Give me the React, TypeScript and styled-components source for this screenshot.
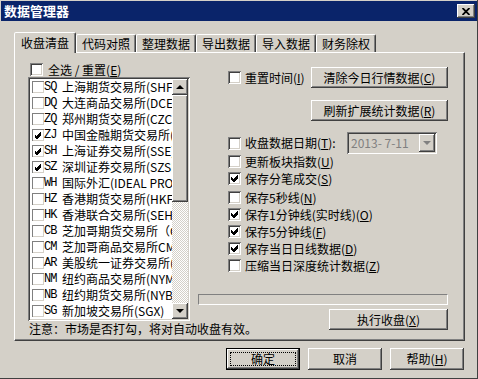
import styled, { createGlobalStyle, css } from "styled-components";

const GlobalStyle = createGlobalStyle`
  html, body { margin: 0; padding: 0; background: #d4d0c8; }
  body {
    font-family: "Noto Sans CJK SC", "Liberation Sans", sans-serif;
    font-size: 12px;
    color: #000;
  }
  * { box-sizing: border-box; }
`;

const raised = css`
  box-shadow: inset -1px -1px #404040, inset 1px 1px #fff, inset -2px -2px #808080, inset 2px 2px #d4d0c8;
`;

const sunken = css`
  box-shadow: inset 1px 1px #808080, inset -1px -1px #fff, inset 2px 2px #404040, inset -2px -2px #d4d0c8;
`;

const Window = styled.div`
  width: 478px;
  height: 379px;
  padding: 1px;
  background: #d4d0c8;
  box-shadow: inset -1px -1px #404040, inset 1px 1px #d4d0c8;
  display: flex;
  flex-direction: column;
`;

const TitleBar = styled.div`
  height: 20px;
  background: #0a246a;
  display: flex;
  align-items: center;
  padding: 0 2px 0 3px;
`;

const Title = styled.div`
  flex: 1;
  color: #fff;
  font-weight: bold;
  font-size: 13px;
  line-height: 16px;
`;

const CloseButton = styled.div`
  width: 18px;
  height: 14px;
  background: #d4d0c8;
  ${raised};
  display: flex;
  align-items: center;
  justify-content: center;
`;

const Body = styled.div`
  padding: 11px 12px 0 13px;
  display: flex;
  flex-direction: column;
`;

const TabStrip = styled.div`
  height: 20px;
  display: flex;
  align-items: flex-end;
  position: relative;
  z-index: 1;
`;

const Tab = styled.div<{ $active?: boolean }>`
  width: ${(p) => (p.$active ? 62 : 60)}px;
  height: ${(p) => (p.$active ? 21 : 18)}px;
  margin-bottom: ${(p) => (p.$active ? -1 : 0)}px;
  background: #d4d0c8;
  border: 1px solid;
  border-bottom: 0;
  border-color: #fff #404040 transparent #fff;
  border-radius: 2px 2px 0 0;
  box-shadow: inset -1px 0 #808080;
  display: flex;
  align-items: center;
  justify-content: center;
  line-height: 14px;
  padding-bottom: ${(p) => (p.$active ? 1 : 0)}px;
`;

const Panel = styled.div`
  height: 289px;
  border: 1px solid;
  border-color: #fff #404040 #404040 #fff;
  box-shadow: inset -1px -1px #808080;
  display: grid;
  grid-template-columns: 162px 250px;
  column-gap: 8px;
  align-items: start;
  padding: 9px 0 0 13px;
`;

const LeftCol = styled.div`
  display: flex;
  flex-direction: column;
`;

const SelectAll = styled.div`
  height: 15px;
  display: flex;
  align-items: center;
  gap: 5px;
  padding-left: 2px;
  line-height: 14px;
`;

const ListBox = styled.div`
  width: 162px;
  height: 244px;
  padding: 2px;
  background: #fff;
  ${sunken};
  display: flex;
`;

const Rows = styled.div`
  flex: 1;
  overflow: hidden;
`;

const Row = styled.div`
  height: 16px;
  display: flex;
  align-items: center;
  padding-left: 2px;
  white-space: nowrap;
  line-height: 16px;
`;

const Code = styled.span`
  width: 18px;
  flex-shrink: 0;
  font-family: "Liberation Mono", monospace;
  font-size: 12px;
  letter-spacing: -1px;
`;

const Scrollbar = styled.div`
  width: 16px;
  display: flex;
  flex-direction: column;
`;

const ScrollButton = styled.div`
  width: 16px;
  height: 16px;
  background: #d4d0c8;
  ${raised};
  display: flex;
  align-items: center;
  justify-content: center;
`;

const Thumb = styled.div`
  height: 107px;
  background: #d4d0c8;
  ${raised};
`;

const Track = styled.div`
  flex: 1;
  background: repeating-conic-gradient(#fff 0 25%, #d4d0c8 0 50%) 0 0 / 2px 2px;
`;

const Arrow = styled.span<{ $down?: boolean; $color?: string }>`
  width: 0;
  height: 0;
  border-left: 4px solid transparent;
  border-right: 4px solid transparent;
  ${(p) =>
    p.$down
      ? `border-top: 4px solid ${p.$color || "#000"};`
      : `border-bottom: 4px solid ${p.$color || "#000"};`}
`;

const Note = styled.div`
  margin-top: 1px;
  padding-left: 1px;
  white-space: nowrap;
  line-height: 14px;
`;

const RightCol = styled.div`
  margin-top: 5px;
  display: flex;
  flex-direction: column;
`;

const TopRow = styled.div`
  height: 21px;
  display: flex;
  align-items: center;
  justify-content: space-between;
  padding-left: 30px;
`;

const ButtonRow = styled.div<{ $top: number }>`
  margin-top: ${(p) => p.$top}px;
  display: flex;
  justify-content: flex-end;
`;

const Button = styled.button<{ $w: number; $h?: number }>`
  width: ${(p) => p.$w}px;
  height: ${(p) => p.$h || 21}px;
  padding: 0;
  border: 0;
  background: #d4d0c8;
  ${raised};
  font: inherit;
  font-size: 12px;
  line-height: 14px;
  color: #000;
  position: relative;
`;

const DefaultButton = styled(Button)`
  box-shadow: inset 0 0 0 1px #000, inset -2px -2px #404040, inset 2px 2px #fff, inset -3px -3px #808080;
  &::after {
    content: "";
    position: absolute;
    inset: 4px;
    border: 1px dotted #000;
  }
`;

const Labeled = styled.div`
  display: flex;
  align-items: center;
  gap: 4px;
  white-space: nowrap;
  line-height: 14px;
`;

const DateRow = styled.div`
  margin-top: 11px;
  height: 22px;
  display: grid;
  grid-template-columns: 119px 90px;
  align-items: center;
  padding-left: 30px;
`;

const Combo = styled.div`
  height: 22px;
  padding: 2px;
  background: #d4d0c8;
  ${sunken};
  display: flex;
  align-items: center;
`;

const ComboText = styled.span`
  flex: 1;
  color: #808080;
  padding-left: 2px;
  white-space: pre;
  line-height: 14px;
`;

const ComboButton = styled.div`
  width: 16px;
  height: 18px;
  background: #d4d0c8;
  ${raised};
  display: flex;
  align-items: center;
  justify-content: center;
`;

const CheckList = styled.div`
  margin-top: -1px;
  display: flex;
  flex-direction: column;
`;

const CheckRow = styled(Labeled)<{ $gap?: number }>`
  height: 17px;
  padding-left: 30px;
  margin-top: ${(p) => p.$gap || 0}px;
`;

const Progress = styled.div`
  margin-top: 20px;
  height: 11px;
  border: 1px solid;
  border-color: #808080 #fff #fff #808080;
`;

const Footer = styled.div`
  margin-top: 7px;
  padding-right: 1px;
  display: flex;
  justify-content: flex-end;
  gap: 8px;
`;

const Box = styled.span<{ $flat?: boolean }>`
  width: ${(p) => (p.$flat ? 12 : 13)}px;
  height: ${(p) => (p.$flat ? 12 : 13)}px;
  flex-shrink: 0;
  background: #fff;
  display: inline-flex;
  ${(p) =>
    p.$flat
      ? "box-shadow: inset 1px 1px #808080, inset -1px -1px #d4d0c8;"
      : "box-shadow: inset 1px 1px #808080, inset -1px -1px #fff, inset 2px 2px #404040, inset -2px -2px #d4d0c8;"}
`;

const Check = ({ on, flat }: { on?: boolean; flat?: boolean }) => (
  <Box $flat={flat}>
    {on && (
      <svg width="13" height="13" viewBox="0 0 13 13">
        <polygon
          points="3,5 5,7 9,3 10,3 10,6 6,10 5,10 3,8"
          fill="#000"
          shapeRendering="crispEdges"
        />
      </svg>
    )}
  </Box>
);

const markets = [
  { code: "SQ", name: "上海期货交易所(SHFE)", on: false },
  { code: "DQ", name: "大连商品交易所(DCE)", on: false },
  { code: "ZQ", name: "郑州期货交易所(CZCE)", on: false },
  { code: "ZJ", name: "中国金融期货交易所(CFFEX)", on: true },
  { code: "SH", name: "上海证券交易所(SSE)", on: true },
  { code: "SZ", name: "深圳证券交易所(SZSE)", on: true },
  { code: "WH", name: "国际外汇(IDEAL PRO)", on: false },
  { code: "HZ", name: "香港期货交易所(HKFE)", on: false },
  { code: "HK", name: "香港联合交易所(SEHK)", on: false },
  { code: "CB", name: "芝加哥期货交易所（CBOT）", on: false },
  { code: "CM", name: "芝加哥商品交易所CME", on: false },
  { code: "AR", name: "美股统一证券交易所(ARCA)", on: false },
  { code: "NM", name: "纽约商品交易所(NYMEX)", on: false },
  { code: "NB", name: "纽约期货交易所(NYBOT)", on: false },
  { code: "SG", name: "新加坡交易所(SGX)", on: false },
];

const options = [
  { label: "更新板块指数", key: "U", on: false, gap: 0 },
  { label: "保存分笔成交", key: "S", on: true, gap: 0 },
  { label: "保存5秒线", key: "N", on: false, gap: 2 },
  { label: "保存1分钟线(实时线)", key: "O", on: true, gap: 0 },
  { label: "保存5分钟线", key: "F", on: true, gap: 0 },
  { label: "保存当日日线数据", key: "D", on: true, gap: 0 },
  { label: "压缩当日深度统计数据", key: "Z", on: false, gap: 0 },
];

const tabs = ["收盘清盘", "代码对照", "整理数据", "导出数据", "导入数据", "财务除权"];

const Acc = ({ k }: { k: string }) => (
  <>
    (<u>{k}</u>)
  </>
);

export default function App() {
  return (
    <>
      <GlobalStyle />
      <Window>
        <TitleBar>
          <Title>数据管理器</Title>
          <CloseButton>
            <svg width="8" height="7" viewBox="0 0 8 7">
              <path d="M0.5 0 L7.5 7 M7.5 0 L0.5 7" stroke="#000" strokeWidth="1.8" />
            </svg>
          </CloseButton>
        </TitleBar>
        <Body>
          <TabStrip>
            {tabs.map((t, i) => (
              <Tab key={t} $active={i === 0}>
                {t}
              </Tab>
            ))}
          </TabStrip>
          <Panel>
            <LeftCol>
              <SelectAll>
                <Check />
                <span>
                  全选 / 重置<Acc k="E" />
                </span>
              </SelectAll>
              <ListBox>
                <Rows>
                  {markets.map((m) => (
                    <Row key={m.code}>
                      <Check on={m.on} flat />
                      <Code>{m.code}</Code>
                      <span>{m.name}</span>
                    </Row>
                  ))}
                </Rows>
                <Scrollbar>
                  <ScrollButton>
                    <Arrow />
                  </ScrollButton>
                  <Thumb />
                  <Track />
                  <ScrollButton>
                    <Arrow $down />
                  </ScrollButton>
                </Scrollbar>
              </ListBox>
              <Note>注意：市场是否打勾，将对自动收盘有效。</Note>
            </LeftCol>
            <RightCol>
              <TopRow>
                <Labeled>
                  <Check />
                  <span>
                    重置时间<Acc k="I" />
                  </span>
                </Labeled>
                <Button $w={137}>
                  清除今日行情数据<Acc k="C" />
                </Button>
              </TopRow>
              <ButtonRow $top={12}>
                <Button $w={137}>
                  刷新扩展统计数据<Acc k="R" />
                </Button>
              </ButtonRow>
              <DateRow>
                <Labeled>
                  <Check />
                  <span>
                    收盘数据日期<Acc k="T" />:
                  </span>
                </Labeled>
                <Combo>
                  <ComboText>2013- 7-11</ComboText>
                  <ComboButton>
                    <Arrow $down $color="#808080" />
                  </ComboButton>
                </Combo>
              </DateRow>
              <CheckList>
                {options.map((o) => (
                  <CheckRow key={o.key} $gap={o.gap}>
                    <Check on={o.on} />
                    <span>
                      {o.label}
                      <Acc k={o.key} />
                    </span>
                  </CheckRow>
                ))}
              </CheckList>
              <Progress />
              <ButtonRow $top={4}>
                <Button $w={119}>
                  执行收盘<Acc k="X" />
                </Button>
              </ButtonRow>
            </RightCol>
          </Panel>
          <Footer>
            <DefaultButton $w={74} $h={22}>
              确定
            </DefaultButton>
            <Button $w={74} $h={22}>
              取消
            </Button>
            <Button $w={74} $h={22}>
              帮助<Acc k="H" />
            </Button>
          </Footer>
        </Body>
      </Window>
    </>
  );
}
